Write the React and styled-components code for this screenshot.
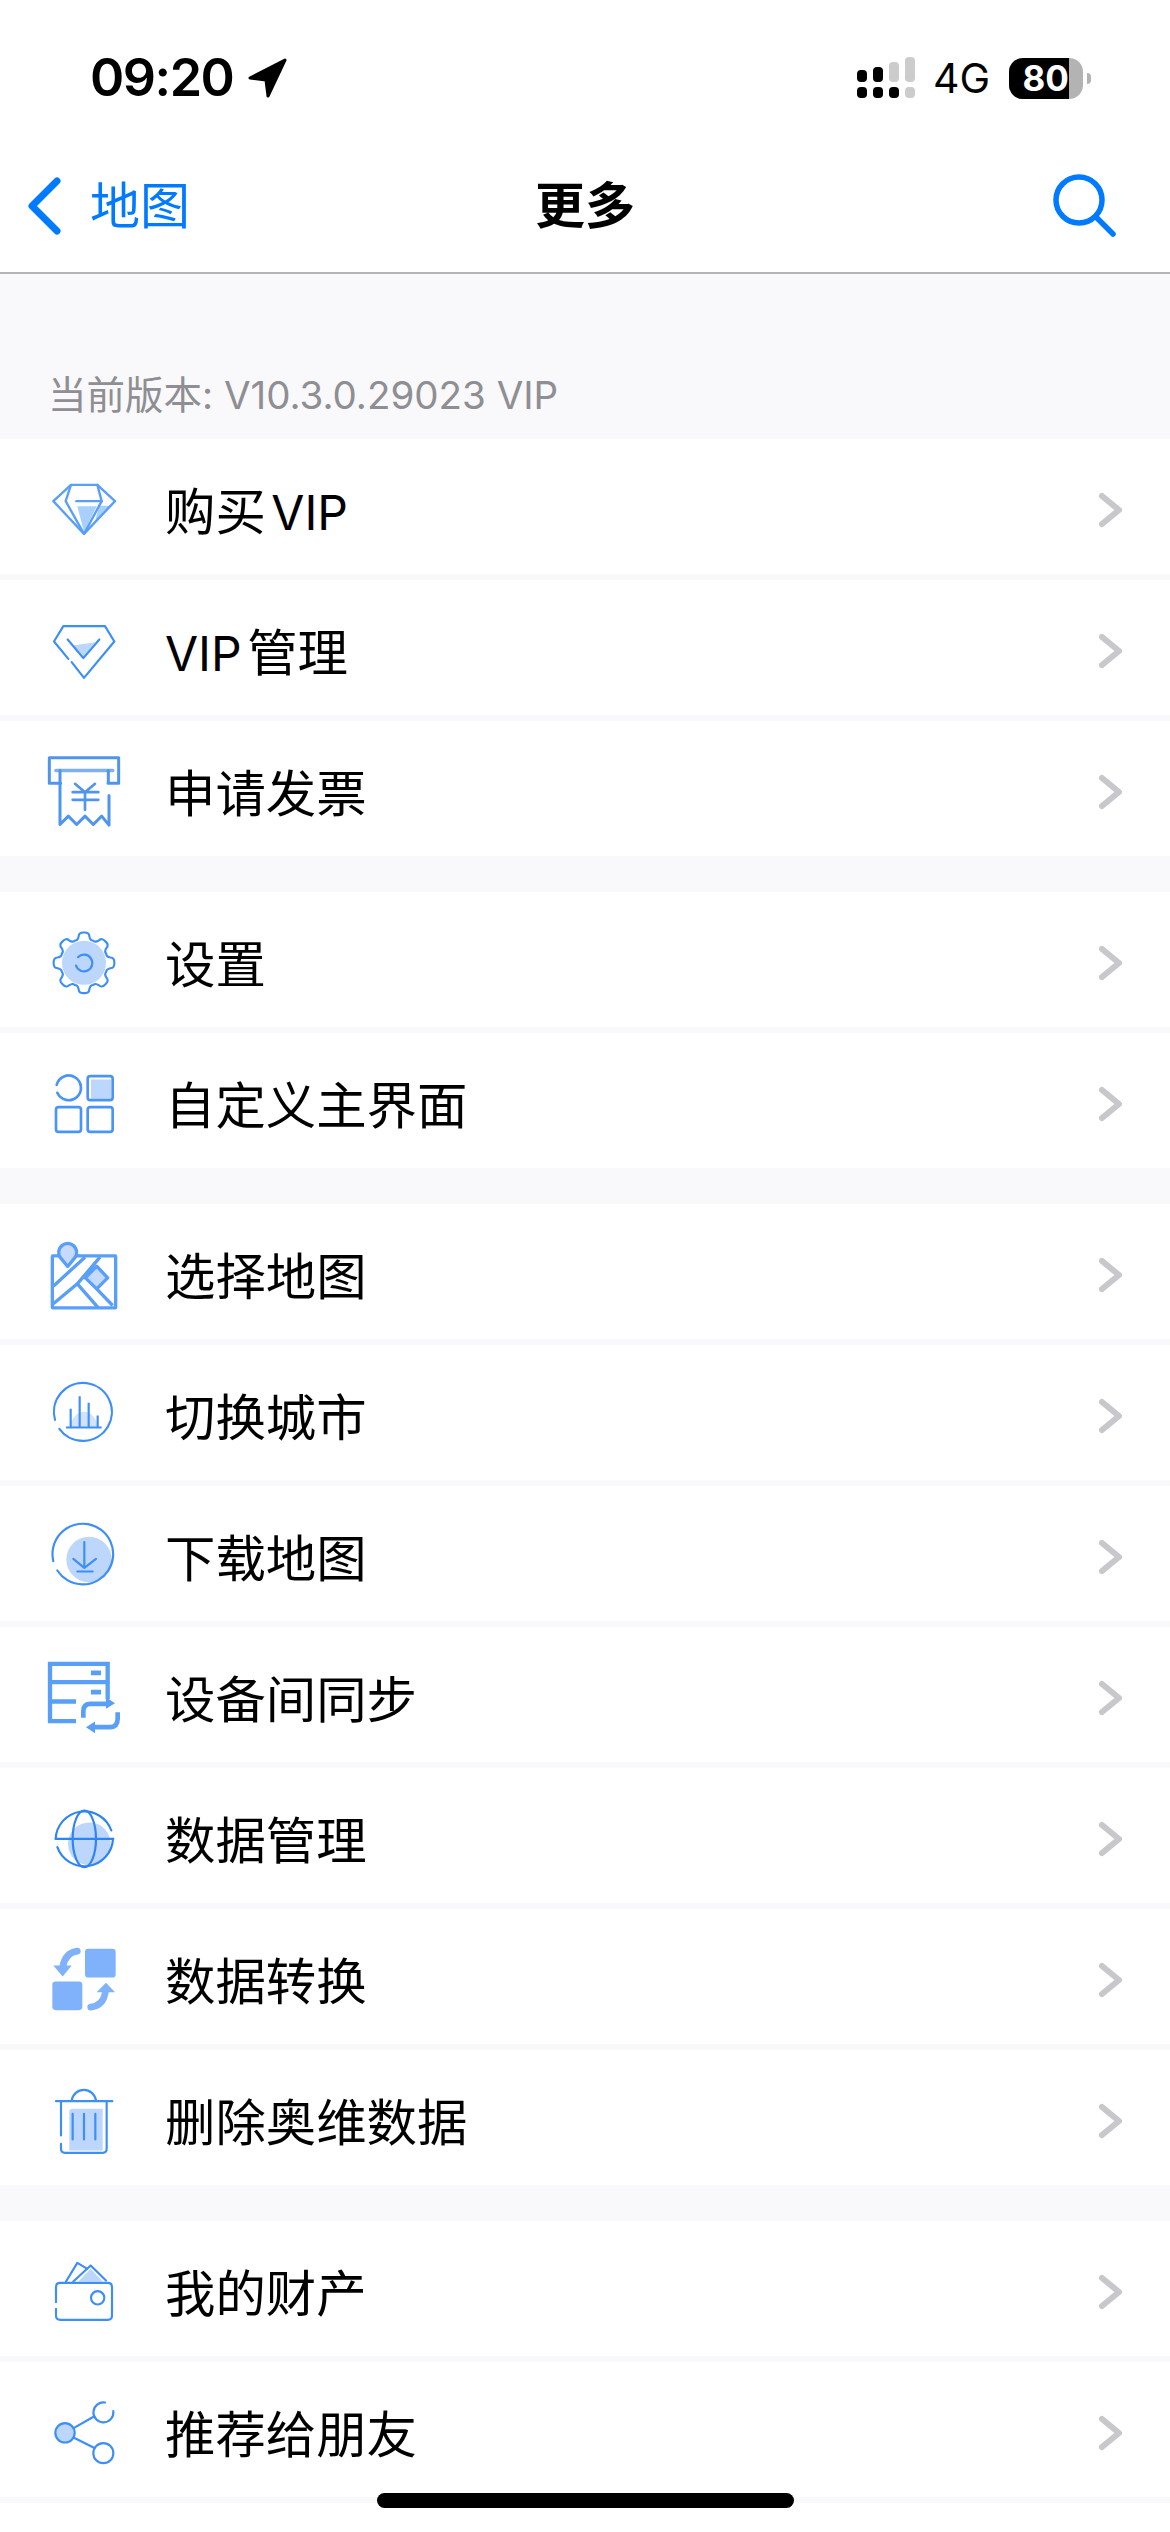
import React from "react";
import styled, { createGlobalStyle } from "styled-components";

const SANS = `Inter, "Noto Sans CJK SC", "Liberation Sans", sans-serif`;
const BLUE = "#3d8ef7";
const SOFT = "#5a9ff7";
const TINT = "#bcd6fc";

const Global = createGlobalStyle`
  html, body { margin: 0; padding: 0; background: #f9f9fb; }
  body { font-family: ${SANS}; }
`;

const Page = styled.div`
  position: relative;
  width: 1170px;
  height: 2532px;
  overflow: hidden;
  background: #f9f9fb;
`;

const StatusBar = styled.header`
  height: 156px;
  box-sizing: border-box;
  background: #fff;
  display: flex;
  align-items: center;
  padding: 0 79px 0 90px;
  color: #000;
`;

const Clock = styled.span`
  font-size: 52px;
  font-weight: 600;
  letter-spacing: -1.5px;
  line-height: 1;
`;

const LocationArrow = styled.svg`
  width: 40px;
  height: 40px;
  margin-left: 15px;
`;

const StatusRight = styled.div`
  margin-left: auto;
  display: flex;
  align-items: center;
`;

const Signal = styled.svg`
  width: 58px;
  height: 42px;
  margin-top: -1px;
`;

const Network = styled.span`
  margin-left: 18px;
  font-size: 41px;
  font-weight: 400;
  line-height: 1;
`;

const Battery = styled.div`
  margin-left: 19px;
  width: 74px;
  height: 41px;
  border-radius: 14px;
  overflow: hidden;
  background: #b3b3b3;
`;

const BatteryLevel = styled.div`
  height: 100%;
  background: #000;
  color: #fff;
  font-size: 35px;
  font-weight: 700;
  line-height: 41px;
  text-align: right;
  box-sizing: border-box;
`;

const BatteryNub = styled.div`
  width: 4px;
  height: 11px;
  margin-left: 4px;
  border-radius: 0 6px 6px 0;
  background: #b3b3b3;
`;

const NavBar = styled.nav`
  height: 118px;
  box-sizing: border-box;
  background: #fff;
  border-bottom: 2px solid #b4b4b6;
  display: flex;
  align-items: center;
  justify-content: space-between;
  padding: 0 54px 16px 27px;
  position: relative;
`;

const BackLink = styled.div`
  display: flex;
  align-items: center;
  color: #007aff;
  font-size: 50px;
  line-height: 1;
  gap: 28px;
`;

const NavTitle = styled.h1`
  position: absolute;
  left: 0;
  right: 0;
  margin: 0;
  text-align: center;
  font-size: 50px;
  font-weight: 700;
  line-height: 1;
  color: #000;
`;

const VersionLabel = styled.div`
  height: 165px;
  box-sizing: border-box;
  display: flex;
  align-items: flex-end;
  padding: 0 0 21px 48px;
  font-size: 38.5px;
  line-height: 1.2;
  color: #8e8e93;
`;

const Section = styled.section`
  display: flex;
  flex-direction: column;
  gap: 6px;
  & + & { margin-top: 36px; }
`;

const Row = styled.div`
  height: 135px;
  background: #fff;
  display: flex;
  align-items: center;
  padding: 0 47px 0 44px;
`;

const IconSlot = styled.svg`
  width: 80px;
  height: 80px;
  flex: none;
  overflow: visible;
`;

const RowLabel = styled.span`
  margin-left: 41px;
  padding-top: 11px;
  font-size: 50.4px;
  line-height: 1;
  color: #000;
  flex: 1;
`;

/* Latin runs sit a little smaller and tighter beside the Chinese text */
const Latin = styled.span`
  font-size: 48px;
  word-spacing: -8px;
`;

const Chevron = styled.svg`
  width: 26px;
  height: 36px;
  margin-top: 6px;
`;

const HomeIndicator = styled.div`
  position: absolute;
  left: 377px;
  bottom: 24px;
  width: 417px;
  height: 15px;
  border-radius: 8px;
  background: #000;
`;

const Tail = styled.div`
  height: 29px;
  margin-top: 6px;
  background: #fff;
`;

/* Frame whose local coordinates run in thirds of a pixel around the row's icon cell */
const Glyph = ({ y, children, stroke = BLUE, w = 6.5 }) => (
  <IconSlot
    viewBox={`132 ${y} 240 240`}
    fill="none"
    stroke={stroke}
    strokeWidth={w}
    strokeLinecap="round"
    strokeLinejoin="round"
  >
    {children}
  </IconSlot>
);

const gearPath = (cx, cy) => {
  const at = (a, r) => `${(cx + r * Math.cos(a)).toFixed(1)} ${(cy + r * Math.sin(a)).toFixed(1)}`;
  const step = Math.PI / 8;
  let d = `M${at(-step, 72)}`;
  for (let i = 0; i < 8; i++) {
    const a = (i * Math.PI) / 4;
    d += `Q${at(a - 0.27, 69)} ${at(a - 0.2, 81)}`;
    d += `Q${at(a - 0.17, 93)} ${at(a, 91)}`;
    d += `Q${at(a + 0.17, 93)} ${at(a + 0.2, 81)}`;
    d += `Q${at(a + 0.27, 69)} ${at(a + step, 72)}`;
  }
  return d + "Z";
};

const DiamondIcon = () => (
  <Glyph y={109.5} stroke={SOFT} w={7}>
    <path d="M232 227H290L252 305Z M298 226H335L285 272Z" fill="#a8d0fd" stroke="none" />
    <path d="M213 163H292L345 212L252 310L160 212Z" />
    <path d="M213 163L197 212L252 310L305 212L292 163" />
    <path d="M229 212H305" />
  </Glyph>
);

const BadgeIcon = () => (
  <Glyph y={532.5}>
    <path d="M218 645Q250 640 285 635L250 680Z" fill={TINT} stroke="none" />
    <path d="M205 685L162 633L190 587H315L343 633L252 742L215 695" />
    <path d="M203 627L250 683L298 627" />
  </Glyph>
);

const ReceiptIcon = () => (
  <Glyph y={955.5} stroke="#4f95ee" w={9}>
    <path d="M182 1058H148V982H356V1058H324" />
    <path d="M168 1020H338" strokeWidth={11} stroke="#7fb0f2" />
    <path d="M180 1020V1182L205 1157L230 1182L255 1157L280 1182L305 1157L327 1184V1095" />
    <path d="M325 1020V1056" />
    <path d="M225 1060L255 1085L285 1060M218 1085H295M218 1108H295M255 1085V1138" strokeWidth={8} />
  </Glyph>
);

const GearIcon = () => (
  <Glyph y={58.5}>
    <circle cx="252" cy="187" r="66" fill={TINT} stroke="none" />
    <path d={gearPath(252, 187)} />
    <path d="M234 170A25 25 0 1 1 228 195" />
  </Glyph>
);

const GridIcon = () => (
  <Glyph y={481.5} stroke="#4a94f8" w={8}>
    <rect x="273" y="537" width="60" height="58" fill={TINT} stroke="none" />
    <path d="M170 553A37 37 0 1 1 172 577" />
    <rect x="263" y="527" width="75" height="72" rx="8" />
    <rect x="168" y="620" width="75" height="74" rx="8" />
    <rect x="263" y="620" width="75" height="74" rx="8" />
  </Glyph>
);

const MapIcon = () => (
  <Glyph y={34.5} stroke={SOFT} w={10}>
    <rect x="157" y="106" width="190" height="156" rx="2" />
    <path d="M160 197L255 110M160 250L232 190L295 262M232 190L300 110M290 205L338 255" strokeLinecap="butt" />
    <path d="M290 137L323 172L290 205L256 172Z" fill="#c5dafc" />
    <path d="M203 138L180 110A27 27 0 1 1 226 110Z" fill="#c5dafc" />
  </Glyph>
);

const CityIcon = () => (
  <Glyph y={457.5}>
    <path d="M212 622A40 48 0 0 1 292 622Z" fill="#d3e3fd" stroke="none" />
    <path d="M178 625A87 87 0 1 0 165 598" />
    <path d="M198 621H305M212 565V621M239 527V621M266 547V621M293 585V621" strokeLinecap="butt" />
  </Glyph>
);

const DownloadIcon = () => (
  <Glyph y={880.5}>
    <circle cx="267" cy="1017" r="68" fill={TINT} stroke="none" />
    <path d="M172 1050A91 91 0 1 0 160 1022" />
    <path d="M253 965V1040M220 1015L253 1042L288 1015M232 1053H278" />
  </Glyph>
);

const SyncIcon = () => (
  <Glyph y={103.5} stroke={SOFT} w={13}>
    <path d="M228 302H150V130H323V236M150 185H323M150 243H228" strokeLinejoin="miter" strokeLinecap="butt" />
    <path d="M273 157H303M273 215H303" strokeWidth={14} strokeLinecap="butt" />
    <path d="M250 292V272Q250 250 272 250H322M353 275V295Q353 320 330 320H282" strokeWidth={14} strokeLinecap="butt" />
    <path d="M318 230L345 248L318 265ZM285 303L258 320L285 338Z" fill={SOFT} stroke="none" />
  </Glyph>
);

const GlobeIcon = () => (
  <Glyph y={526.5} stroke="#2f84f5">
    <circle cx="268" cy="670" r="64" fill={TINT} stroke="none" />
    <path d="M167 655A86 86 0 0 1 334 630M339 655A86 86 0 0 1 172 680" />
    <path d="M167 655H340" />
    <ellipse cx="253" cy="655" rx="35" ry="85" />
  </Glyph>
);

const ConvertIcon = () => (
  <Glyph y={949.5} stroke="#7fb2fb" w={20}>
    <rect x="255" y="985" width="92" height="86" rx="10" fill="#7fb2fb" stroke="none" />
    <rect x="157" y="1083" width="90" height="86" rx="10" fill="#7fb2fb" stroke="none" />
    <path d="M232 992Q195 997 188 1040M272 1160Q310 1155 316 1115" />
    <path d="M160 1035H215L188 1068ZM290 1115H345L318 1087Z" fill="#7fb2fb" stroke="none" />
  </Glyph>
);

const TrashIcon = () => (
  <Glyph y={172.5}>
    <path d="M208 275Q208 265 218 265H308V390H208Z" fill={TINT} stroke="none" />
    <path d="M168 242H337M215 240A37 38 0 0 1 288 240" />
    <path d="M183 345V242M320 242V385Q320 397 308 397H195Q183 397 183 385V370" />
    <path d="M218 280V357M252 280V357M286 280V357" />
  </Glyph>
);

const WalletIcon = () => (
  <Glyph y={685.5}>
    <path d="M235 783L272 745L308 783Z" fill={TINT} stroke="none" />
    <path d="M168 845V800Q168 787 181 787H323Q336 787 336 800V885Q336 898 323 898H181Q168 898 168 885V865" />
    <circle cx="293" cy="832" r="20" />
    <path d="M198 783L232 727L262 745M220 783L272 735L318 780" />
  </Glyph>
);

const ShareIcon = () => (
  <Glyph y={1108.5}>
    <circle cx="195" cy="1237" r="29" fill={TINT} />
    <path d="M340 1172A30 30 0 1 1 315 1146" />
    <circle cx="310" cy="1298" r="30" />
    <path d="M222 1222L282 1188M222 1252L282 1282" />
  </Glyph>
);

const SECTIONS = [
  [
    ["buy", <>购买<Latin> VIP</Latin></>, DiamondIcon],
    ["manage", <><Latin>VIP </Latin>管理</>, BadgeIcon],
    ["invoice", "申请发票", ReceiptIcon],
  ],
  [
    ["settings", "设置", GearIcon],
    ["home", "自定义主界面", GridIcon],
  ],
  [
    ["pick", "选择地图", MapIcon],
    ["city", "切换城市", CityIcon],
    ["download", "下载地图", DownloadIcon],
    ["sync", "设备间同步", SyncIcon],
    ["data", "数据管理", GlobeIcon],
    ["convert", "数据转换", ConvertIcon],
    ["delete", "删除奥维数据", TrashIcon],
  ],
  [
    ["assets", "我的财产", WalletIcon],
    ["share", "推荐给朋友", ShareIcon],
  ],
];

const RowArrow = () => (
  <Chevron viewBox="0 0 26 36" fill="none" stroke="#c7c7cc" strokeWidth="6" strokeLinecap="round" strokeLinejoin="round">
    <path d="M5 4L22 18L5 32" />
  </Chevron>
);

export default function App() {
  return (
    <Page>
      <Global />
      <StatusBar>
        <Clock>09:20</Clock>
        <LocationArrow viewBox="0 0 40 40">
          <path d="M37 2L2 20L18 22L20 38Z" fill="#000" stroke="#000" strokeWidth="3" strokeLinejoin="round" />
        </LocationArrow>
        <StatusRight>
          <Signal viewBox="0 0 58 42">
            <rect x="0" y="13" width="10" height="12" rx="4" fill="#000" />
            <rect x="16" y="10" width="10" height="15" rx="4" fill="#000" />
            <rect x="32" y="5" width="10" height="20" rx="4" fill="#ccc" />
            <rect x="48" y="0" width="10" height="25" rx="4" fill="#ccc" />
            <rect x="0" y="30" width="10" height="11" rx="4" fill="#000" />
            <rect x="16" y="30" width="10" height="11" rx="4" fill="#000" />
            <rect x="32" y="30" width="10" height="11" rx="4" fill="#000" />
            <rect x="48" y="30" width="10" height="11" rx="4" fill="#ccc" />
          </Signal>
          <Network>4G</Network>
          <Battery>
            <BatteryLevel style={{ width: "81%" }}>80</BatteryLevel>
          </Battery>
          <BatteryNub />
        </StatusRight>
      </StatusBar>

      <NavBar>
        <BackLink>
          <svg width="35" height="58" viewBox="0 0 35 58" fill="none" stroke="#007aff" strokeWidth="7" strokeLinecap="round" strokeLinejoin="round">
            <path d="M30 4L5 29L30 54" />
          </svg>
          <span>地图</span>
        </BackLink>
        <NavTitle>更多</NavTitle>
        <svg width="64" height="64" viewBox="0 0 64 64" fill="none" stroke="#007aff" strokeWidth="5.5" strokeLinecap="round">
          <circle cx="27" cy="26" r="23" />
          <path d="M45 44L61 60" />
        </svg>
      </NavBar>

      <VersionLabel>当前版本: V10.3.0.29023 VIP</VersionLabel>

      {SECTIONS.map((rows, i) => (
        <Section key={i}>
          {rows.map(([id, label, Icon]) => (
            <Row key={id}>
              <Icon />
              <RowLabel>{label}</RowLabel>
              <RowArrow />
            </Row>
          ))}
        </Section>
      ))}
      <Tail />
      <HomeIndicator />
    </Page>
  );
}
